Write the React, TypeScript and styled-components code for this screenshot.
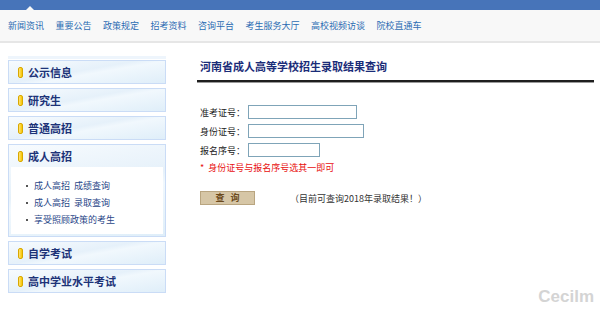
import React, { ReactElement } from 'react';
import styled, { createGlobalStyle } from 'styled-components';

const NAV_ITEMS = ['新闻资讯', '重要公告', '政策规定', '招考资料', '咨询平台', '考生服务大厅', '高校视频访谈', '院校直通车'];

const SUB_LINKS = ['成人高招  成绩查询', '成人高招  录取查询', '享受照顾政策的考生'];

function App(): ReactElement {
  return (
    <Page>
      <GlobalStyle />
      <TopBar>
        <Notch />
      </TopBar>
      <NavBar>
        {NAV_ITEMS.map((item) => (
          <NavLink key={item}>{item}</NavLink>
        ))}
      </NavBar>
      <Body>
        <Sidebar>
          <SideTop />
          <SideBox>
            <SideHead>
              <Marker />
              公示信息
            </SideHead>
          </SideBox>
          <SideBox>
            <SideHead>
              <Marker />
              研究生
            </SideHead>
          </SideBox>
          <SideBox>
            <SideHead>
              <Marker />
              普通高招
            </SideHead>
          </SideBox>
          <SideBox>
            <SideHead>
              <Marker />
              成人高招
            </SideHead>
            <SubList>
              {SUB_LINKS.map((link) => (
                <SubItem key={link}>{link}</SubItem>
              ))}
            </SubList>
          </SideBox>
          <SideBox>
            <SideHead>
              <Marker />
              自学考试
            </SideHead>
          </SideBox>
          <SideBox>
            <SideHead>
              <Marker />
              高中学业水平考试
            </SideHead>
          </SideBox>
        </Sidebar>
        <Main>
          <Title>河南省成人高等学校招生录取结果查询</Title>
          <Form>
            <FieldRow>
              <Label>准考证号：</Label>
              <Input $width={109} />
            </FieldRow>
            <FieldRow>
              <Label>身份证号：</Label>
              <Input $width={116} />
            </FieldRow>
            <FieldRow>
              <Label>报名序号：</Label>
              <Input $width={72} />
            </FieldRow>
            <Note>* &nbsp;身份证号与报名序号选其一即可</Note>
            <ActionRow>
              <QueryButton type="button">查&nbsp;&nbsp;&nbsp;询</QueryButton>
              <Hint>（目前可查询2018年录取结果！）</Hint>
            </ActionRow>
          </Form>
        </Main>
      </Body>
      <Watermark>Cecilm</Watermark>
    </Page>
  );
}

const GlobalStyle = createGlobalStyle`
  html, body {
    margin: 0;
    padding: 0;
    background: #ffffff;
  }
  body {
    font-family: "Noto Sans CJK SC", "Liberation Sans", sans-serif;
  }
`;

const Page = styled.div`
  position: relative;
  width: 600px;
  height: 310px;
  overflow: hidden;
  background: #ffffff;
`;

const TopBar = styled.div`
  position: relative;
  height: 10px;
  background: #4774b9;
`;

const Notch = styled.div`
  position: absolute;
  left: 26px;
  bottom: 0;
  width: 0;
  height: 0;
  border-left: 4px solid transparent;
  border-right: 4px solid transparent;
  border-bottom: 4px solid #f8f8f8;
`;

const NavBar = styled.div`
  display: flex;
  align-items: center;
  gap: 11.5px;
  height: 31px;
  padding-left: 8px;
  background: #f8f8f8;
  border-bottom: 2px solid #e6e6e6;
`;

const NavLink = styled.span`
  font-size: 9px;
  line-height: 12px;
  color: #2b6cb3;
  white-space: nowrap;
`;

const Body = styled.div`
  display: flex;
  padding: 0 6px 0 8px;
  gap: 31px;
`;

const Sidebar = styled.div`
  display: flex;
  flex-direction: column;
  gap: 4px;
  width: 158px;
  padding-top: 13px;
`;

const SideTop = styled.div`
  height: 3px;
  margin-bottom: -3px;
  background: #eef5fc;
`;

const SideBox = styled.div`
  border: 1px solid #cadcf6;
  background: linear-gradient(170deg, #f7fbfe 0%, #e6f1fa 45%, #f1f8fd 55%, #dfeef9 100%);
`;

const SideHead = styled.div`
  display: flex;
  align-items: center;
  height: 22px;
  padding-left: 9px;
  font-size: 11px;
  font-weight: bold;
  color: #1d3378;
  white-space: nowrap;
`;

const Marker = styled.span`
  display: inline-block;
  box-sizing: border-box;
  width: 5px;
  height: 11px;
  margin-right: 5px;
  border-radius: 2px;
  border: 1px solid #d9a800;
  background: linear-gradient(90deg, #ffe27a, #f7c600);
`;

const SubList = styled.ul`
  list-style: none;
  margin: 0 2px 2px;
  padding: 10px 0 6px 15px;
  background: #ffffff;
`;

const SubItem = styled.li`
  position: relative;
  padding-left: 8px;
  font-size: 9px;
  line-height: 17px;
  color: #2a4788;
  white-space: pre;

  &::before {
    content: '';
    position: absolute;
    left: 0;
    top: 8px;
    width: 2px;
    height: 2px;
    background: #555555;
  }
`;

const Main = styled.div`
  flex: 1;
  padding-top: 16px;
`;

const Title = styled.div`
  padding: 0 0 7px 3px;
  font-size: 11px;
  line-height: 14px;
  font-weight: bold;
  color: #1a2c78;
  border-bottom: 2px solid #1e1e1e;
  box-shadow: 0 1px 0 #9a9a9a;
`;

const Form = styled.div`
  display: flex;
  flex-direction: column;
  gap: 5px;
  padding: 23px 0 0 3px;
`;

const FieldRow = styled.div`
  display: flex;
  align-items: center;
  height: 14px;
`;

const Label = styled.span`
  flex: none;
  width: 48px;
  font-size: 9px;
  white-space: nowrap;
  color: #222222;
`;

const Input = styled.input<{ $width: number }>`
  box-sizing: border-box;
  width: ${(p) => p.$width}px;
  height: 14px;
  margin: 0;
  padding: 0;
  border: 1px solid #7fa4b8;
  background: #ffffff;
`;

const Note = styled.div`
  margin-top: 0;
  font-size: 9px;
  line-height: 12px;
  color: #e80f0f;
  white-space: nowrap;
`;

const ActionRow = styled.div`
  display: flex;
  align-items: center;
  margin-top: 12px;
`;

const QueryButton = styled.button`
  width: 55px;
  height: 14px;
  padding: 0;
  border: 1px solid #b9a580;
  background: #d6c6a6;
  font-family: inherit;
  font-size: 9px;
  font-weight: bold;
  line-height: 12px;
  color: #6b4a1c;
`;

const Hint = styled.span`
  margin-left: 35px;
  font-size: 9px;
  color: #333333;
  white-space: nowrap;
`;

const Watermark = styled.div`
  position: absolute;
  right: 6px;
  bottom: 3px;
  font-family: "Liberation Sans", sans-serif;
  font-size: 17px;
  font-weight: bold;
  color: #d4d4d4;
`;

export default App;
